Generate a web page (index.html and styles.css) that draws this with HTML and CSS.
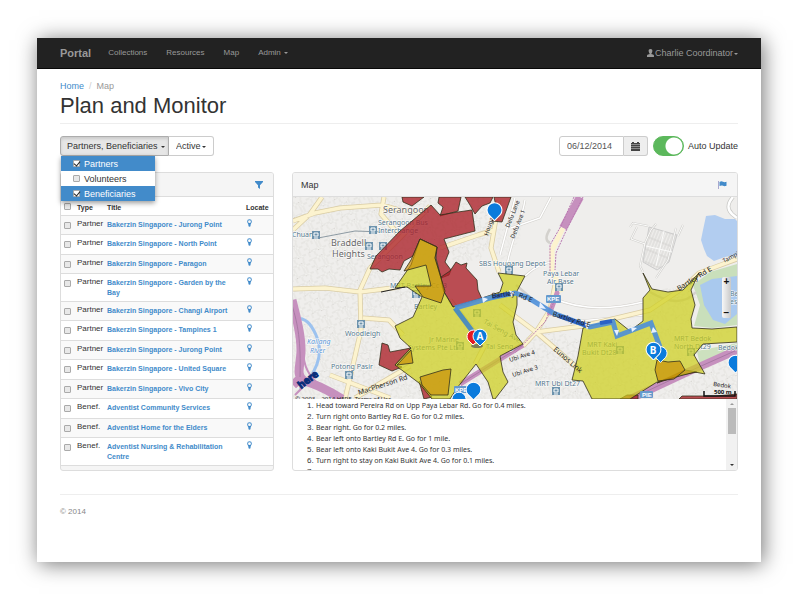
FILE: index.html
```html
<!DOCTYPE html>
<html lang="en">
<head>
<meta charset="utf-8">
<title>Plan and Monitor</title>
<link rel="stylesheet" href="styles.css">
</head>
<body>
<svg class="defs" aria-hidden="true">
  <symbol id="pin" viewBox="0 0 6 9"><path d="M3 0a2.800 2.800 0 0 0-2.800 2.800C.2 4.400 1.700 5 1.800 8.200a1.200 .8 0 0 0 2.400 0C4.300 5 5.800 4.400 5.800 2.800A2.800 2.800 0 0 0 3 0zm0 1.200a1.700 1.700 0 1 1 0 3.400 1.700 1.700 0 0 1 0-3.400z" fill="currentColor" fill-rule="evenodd"/></symbol>
  <symbol id="drop" viewBox="-8 -18 16 18"><path d="M0 0L-5.500-5.500A7 7 0 1 1 5.500-5.500z" fill="#0b7bdc" stroke="#fff" stroke-width="1"/></symbol>
</svg>
<div class="page">
  <nav class="navbar">
    <a class="brand" href="#">Portal</a>
    <a href="#">Collections</a>
    <a href="#">Resources</a>
    <a href="#">Map</a>
    <a href="#">Admin <span class="caret"></span></a>
    <a class="user" href="#"><svg class="user-icon" viewBox="0 0 7 8" aria-hidden="true"><path d="M3.500 0C1.800 0 1.400 1.200 1.700 2.600c.2 1 .5 1.500.9 1.900v.5L.5 5.700C0 6 0 6.600 0 8h7c0-1.400 0-2-.5-2.300L4.400 5v-.5c.4-.4.7-.9.9-1.900C5.600 1.200 5.200 0 3.500 0z" fill="currentColor"/></svg>Charlie Coordinator<span class="caret"></span></a>
  </nav>
  <main class="content">
    <div class="crumbs"><a href="#">Home</a><span class="slash">/</span><span>Map</span></div>
    <h1>Plan and Monitor</h1>
    <div class="toolbar">
      <div class="filters">
        <button class="btn active" type="button" aria-expanded="true">Partners, Beneficiaries <span class="caret"></span></button>
        <span class="select-wrap"><select class="btn" aria-label="Status"><option>Active</option></select><span class="caret"></span></span>
        <div class="menu">
          <label class="on"><input type="checkbox" checked>Partners</label>
          <label><input type="checkbox">Volunteers</label>
          <label class="on"><input type="checkbox" checked>Beneficiaries</label>
        </div>
      </div>
      <div class="date">
        <input type="text" value="06/12/2014" aria-label="Date">
        <button type="button" aria-label="Choose date"><svg width="9" height="9" viewBox="0 0 9 9"><path d="M0 1h1V0h2v1h3V0h2v1h1v8H0z" fill="#444"/><path d="M0 2.500h9M0 4.500h9M0 6.500h9" stroke="#bbb" stroke-width=".6"/></svg></button>
      </div>
      <label class="switch"><input type="checkbox" checked><span>Auto Update</span></label>
    </div>
    <div class="columns">
      <section class="panel list">
        <header><button type="button" aria-label="Filter"><svg width="8" height="8" viewBox="0 0 8 8"><path d="M0 0h8v1L5 4.200V8L3 6.500V4.200L0 1z" fill="#428bca"/></svg></button></header>
        <table>
          <thead><tr><th class="c-check"><input type="checkbox" aria-label="Select all"></th><th class="c-type">Type</th><th>Title</th><th class="c-loc">Locate</th></tr></thead>
          <tbody>
            <tr><td><input type="checkbox" aria-label="Select"></td><td>Partner</td><td><a href="#">Bakerzin Singapore - Jurong Point</a></td><td><a href="#" aria-label="Locate"><svg class="pin"><use href="#pin"/></svg></a></td></tr>
            <tr><td><input type="checkbox" aria-label="Select"></td><td>Partner</td><td><a href="#">Bakerzin Singapore - North Point</a></td><td><a href="#" aria-label="Locate"><svg class="pin"><use href="#pin"/></svg></a></td></tr>
            <tr><td><input type="checkbox" aria-label="Select"></td><td>Partner</td><td><a href="#">Bakerzin Singapore - Paragon</a></td><td><a href="#" aria-label="Locate"><svg class="pin"><use href="#pin"/></svg></a></td></tr>
            <tr><td><input type="checkbox" aria-label="Select"></td><td>Partner</td><td><a href="#">Bakerzin Singapore - Garden by the Bay</a></td><td><a href="#" aria-label="Locate"><svg class="pin"><use href="#pin"/></svg></a></td></tr>
            <tr><td><input type="checkbox" aria-label="Select"></td><td>Partner</td><td><a href="#">Bakerzin Singapore - Changi Airport</a></td><td><a href="#" aria-label="Locate"><svg class="pin"><use href="#pin"/></svg></a></td></tr>
            <tr><td><input type="checkbox" aria-label="Select"></td><td>Partner</td><td><a href="#">Bakerzin Singapore - Tampines 1</a></td><td><a href="#" aria-label="Locate"><svg class="pin"><use href="#pin"/></svg></a></td></tr>
            <tr><td><input type="checkbox" aria-label="Select"></td><td>Partner</td><td><a href="#">Bakerzin Singapore - Jurong Point</a></td><td><a href="#" aria-label="Locate"><svg class="pin"><use href="#pin"/></svg></a></td></tr>
            <tr><td><input type="checkbox" aria-label="Select"></td><td>Partner</td><td><a href="#">Bakerzin Singapore - United Square</a></td><td><a href="#" aria-label="Locate"><svg class="pin"><use href="#pin"/></svg></a></td></tr>
            <tr><td><input type="checkbox" aria-label="Select"></td><td>Partner</td><td><a href="#">Bakerzin Singapore - Vivo City</a></td><td><a href="#" aria-label="Locate"><svg class="pin"><use href="#pin"/></svg></a></td></tr>
            <tr><td><input type="checkbox" aria-label="Select"></td><td>Benef.</td><td><a href="#">Adventist Community Services</a></td><td><a href="#" aria-label="Locate"><svg class="pin"><use href="#pin"/></svg></a></td></tr>
            <tr><td><input type="checkbox" aria-label="Select"></td><td>Benef.</td><td><a href="#">Adventist Home for the Elders</a></td><td><a href="#" aria-label="Locate"><svg class="pin"><use href="#pin"/></svg></a></td></tr>
            <tr><td><input type="checkbox" aria-label="Select"></td><td>Benef.</td><td><a href="#">Adventist Nursing &amp; Rehabilitation Centre</a></td><td><a href="#" aria-label="Locate"><svg class="pin"><use href="#pin"/></svg></a></td></tr>
          </tbody>
        </table>
      </section>
      <section class="panel">
        <header><h2>Map</h2><button type="button" aria-label="Flag"><svg width="9" height="8" viewBox="0 0 9 8"><path d="M.5 0v8" stroke="#a9a9cf"/><path d="M1.500 1c1.500-1 2.500-.8 3.500-.2s2 .6 3.500 0v4c-1.500.7-2.500.6-3.500 0s-2-.6-3.500.3z" fill="#428bca"/></svg></button></header>
        <div class="map">
          <svg class="map-art" viewBox="293 197 444 202" role="img" aria-label="Street map of Serangoon, Paya Lebar and Bedok">
            <defs>
              <pattern id="streets" width="22" height="19" patternUnits="userSpaceOnUse" patternTransform="rotate(-24)">
                <path d="M0 3h14v12h8M5 3v11h9M10 0v8M0 10h5M17 0v15M14 6h8M3 14v5M9 14v5M18 15v4" fill="none" stroke="#d3d1cc" stroke-width="1.800"/>
                <path d="M0 3h14v12h8M5 3v11h9M10 0v8M0 10h5M17 0v15M14 6h8M3 14v5M9 14v5M18 15v4" fill="none" stroke="#fcfcfa" stroke-width="1"/>
              </pattern>
              <pattern id="depot" width="3" height="12" patternUnits="userSpaceOnUse" patternTransform="rotate(22)">
                <path d="M1 0v12M0 1h3" stroke="#cfcecb" stroke-width=".8" fill="none"/>
              </pattern>
              <g id="station"><rect x="-4" y="-4" width="8" height="8" fill="#6d93ad"/><path d="M-2-2h4v3h-4zM-2 3h4" fill="none" stroke="#fff"/></g>
            </defs>
            <rect x="293" y="197" width="444" height="202" fill="#efeeec"/>
            <g fill="url(#streets)">
              <path d="M293 197H500L495 235 480 260 450 262 430 300 380 320 405 350 430 399H293z"/>
              <path d="M500 355L545 325 590 345 575 380 590 399H495z"/>
              <path d="M395 290L455 307 512 295 520 340 490 399 410 399zM585 330L650 323 692 328 735 330 700 350 690 370 640 399 585 399zM690 375L737 355V399H640zM650 290L700 285 692 325 645 322z"/>
              <path d="M497 215L525 200 520 240 495 270z" opacity=".6"/>
            </g>
            <path d="M706 216L715 215 725 219 735 219 737 221V255L725 257 714 261 707 256 704 249 701 240 703 230z" fill="#b2cdf0"/>
            <path d="M693 285L710 272 737 264V325L712 328 694 326 700 305z" fill="#c9dfbb"/>
            <path d="M700 285L712 279 737 276V314L725 324 713 320 704 305z" fill="#a9c9ee"/>
            <path d="M697 351L737 343V350L700 366z" fill="#cde1bf"/>
            <path d="M733 197C727 204 727 209 732 214L737 218" fill="none" stroke="#c9c9c6" stroke-width="4"/>
            <path d="M733 197C727 204 727 209 732 214L737 218" fill="none" stroke="#fff" stroke-width="2.500"/>
            <path d="M649 227L677 235 669 262 657 270 643 262z" fill="url(#depot)" stroke="#ccc"/>
            <path d="M630 227L633 223 648 226M637 227L631 239 645 244M683 225L678 236M676 228L668 260 656 278M643 272L640 266 645 243 651 230 656 224" fill="none" stroke="#d0cfcc" stroke-width="2"/>
            <path d="M630 227L633 223 648 226M637 227L631 239 645 244M683 225L678 236M676 228L668 260 656 278M643 272L640 266 645 243 651 230 656 224M646 246L672 252M664 231L656 266" fill="none" stroke="#fbfbfa" stroke-width="1"/>
            <g fill="none" stroke="#d3d1cd" stroke-width="2.500">
              <path d="M515 198L508 225 500 255M525 200C521 225 512 235 506 270M511 228L540 218 551 197M550 229Q543 240 550 243M525 276Q540 262 555 262M516 285L545 310M527 298L570 322 643 315M650 292Q680 310 696 292M553 298Q590 315 643 302"/>
            </g>
            <g fill="none" stroke="#fff" stroke-width="1.500">
              <path d="M515 198L508 225 500 255M525 200C521 225 512 235 506 270M511 228L540 218 551 197M525 276Q540 262 555 262M527 298L570 322 643 315M553 298Q590 315 643 302"/>
            </g>
            <path d="M293 318C306 317 311 324 316 335C322 348 321 362 309 379L300 389" fill="none" stroke="#9cc2ef" stroke-width="3"/>
            <g fill="none" stroke="#d9cca5" stroke-width="5" stroke-linejoin="round">
              <path d="M293 221L315 213 340 208 382 205 399 210 425 213M322 197L310 214 293 230M384 197L381 214 399 235M370 268L360 290 361 330 353 365 345 399M293 289L325 288 360 292 400 287M370 268L400 238 430 206M363 318L389 320 403 335M499 200L493 236 491 248 499 272M440 248L478 235 494 230M500 305L536 332 580 370M555 285L550 310 536 332 524 345 512 350M737 259L699 273 683 288 650 310 583 326 536 332M355 398L410 366M330 375L390 398M475 364L485 345 473 330 450 300"/>
            </g>
            <g fill="none" stroke="#fcf3cf" stroke-width="3.500" stroke-linejoin="round">
              <path d="M293 221L315 213 340 208 382 205 399 210 425 213M322 197L310 214 293 230M384 197L381 214 399 235M370 268L360 290 361 330 353 365 345 399M293 289L325 288 360 292 400 287M370 268L400 238 430 206M363 318L389 320 403 335M499 200L493 236 491 248 499 272M440 248L478 235 494 230M500 305L536 332 580 370M555 285L550 310 536 332 524 345 512 350M737 259L699 273 683 288 650 310 583 326 536 332M355 398L410 366M330 375L390 398M475 364L485 345 473 330 450 300"/>
            </g>
            <g fill="none" stroke="#c690be">
              <path d="M292 300C297 320 301 335 301 350S295 375 304 381Q320 385 342 399M293 385L303 376" stroke-width="9"/>
              <path d="M580 197L563 228M630 399L690 371 737 350" stroke-width="8"/>
              <path d="M560 285L549 315M523 345L460 384" stroke-width="5"/>
              <path d="M304 343Q300 370 320 385L338 399M295 395L315 375" stroke-width="2"/>
            </g>
            <path d="M292 305C298 325 301 340 300 377M630 399L690 371 737 350M523 345L460 384" fill="none" stroke="#a87aa4" stroke-width="1"/>
            <path d="M563 228L552 250V270L562 292" fill="none" stroke="#fcf3cf" stroke-width="5"/>
            <path d="M574 197L561 226 550 245 550 275M583 197L566 231 556 253 555 270M557 295L545 322 515 353" fill="none" stroke="#b877b0" stroke-width="1" stroke-dasharray="2 1"/>
            <path d="M318 238L355 231 383 232" fill="none" stroke="#8d9aa3" stroke-width="1"/>
            <g class="lbl">
              <text x="292" y="237">Chuan</text>
              <text x="378" y="225">Serangoon Bus</text><text x="378" y="233">Interchange</text>
              <text x="367" y="259">Serangoon</text>
              <text x="390" y="288">MRT Bartley Cc13</text>
              <text x="414" y="309">Bartley</text>
              <text x="345" y="336">Woodleigh</text>
              <text x="331" y="369">Potong Pasir</text>
              <text x="429" y="342">Jr Marine</text><text x="408" y="350">Systems Pte Ltd</text>
              <text x="486" y="349">Tai Seng</text>
              <text x="483" y="323" transform="rotate(29 483 323)">Tai Seng Ave</text>
              <text x="479" y="266">SBS Hougang Depot</text>
              <text x="543" y="276">Paya Lebar</text><text x="547" y="284">Air Base</text>
              <text x="535" y="386">MRT Ubi Dt27</text>
              <text x="587" y="347">MRT Kaki</text><text x="582" y="355">Bukit Dt28</text>
              <text x="674" y="341">MRT Bedok</text><text x="674" y="349">North Dt29</text>
              <text x="718" y="350">Bedok</text>
              <text x="730" y="296">Be</text><text x="730" y="304">es</text>
            </g>
            <g class="lbl big"><text x="383" y="213">Serangoon</text><text x="331" y="246">Braddell</text><text x="332" y="257">Heights</text></g>
            <g class="lbl water"><text x="307" y="344">Kallang</text><text x="310" y="353">River</text></g>
            <use href="#station" x="316" y="235"/><use href="#station" x="373" y="230"/><use href="#station" x="369" y="246"/><use href="#station" x="383" y="246"/><use href="#station" x="361" y="324"/><use href="#station" x="349" y="375"/><use href="#station" x="416" y="294"/><use href="#station" x="477" y="313"/><use href="#station" x="460" y="346"/><use href="#station" x="509" y="270"/><use href="#station" x="559" y="287"/><use href="#station" x="556" y="391"/><use href="#station" x="620" y="350"/><use href="#station" x="691" y="352"/>
            <g stroke="#33301c" stroke-width=".8" stroke-linejoin="round">
              <g fill="#aa2028" fill-opacity=".78">
                <path d="M402 197H424L420 200 412 206 403 202z"/>
                <path d="M439 197H461L458 211 440 216 443 207 438 203z"/>
                <path d="M465 197H493L490 203 482 206 475 214 470 205z"/>
                <path d="M494 197H511L502 222 492 221 497 211z"/>
                <path d="M431 205L440 215 458 212 472 210 475 231 444 239 449 252 445 262 451 270 449 275 441 278 436 258 437 247 420 239 413 256 404 261 400 270 389 269 382 272 378 269 370 269 376 256 400 231z"/>
                <path d="M441 277L450 271 456 262 461 265 467 263 466 268 477 280 478 290 482 299 466 305 453 307 443 290z"/>
                <path d="M382 343L388 345 390 352 411 348 395 365 402 367 392 371 379 365z"/>
                <path d="M685 370L697 372 681 375 657 383z"/>
                <path d="M620 399L627 395H638V399zM679 399L682 396 716 396 737 394V399z"/>
                <path d="M419 381L432 397 424 399z"/>
              </g>
              <g fill="#cdcf18" fill-opacity=".7">
                <path d="M420 239L437 247 435 258 441 278 444 292 453 307 482 298 500 292 503 283 498 273 525 276 517 291 517 305 513 322 516 335 523 344 500 356 503 372 508 382 495 399H493L488 382 476 364 457 388 450 399H432L419 383 395 365 411 348 400 338 395 326 413 317 422 297 407 287 395 288 411 265z"/>
                <path d="M643 273L652 289 668 292 683 290 699 273 691 290 695 305 691 319 692 328 712 329 737 327V342L703 344 694 355 705 374 695 372 657 382 630 399H592L583 381 572 380 578 356 583 328 615 319 630 331 643 321V298L650 290z"/>
              </g>
              <g fill="#c78b00" fill-opacity=".65">
                <path d="M420 239L437 247 435 258 441 278 445 291 441 303 423 297 415 286 431 286 426 265 404 271 411 260z"/>
                <path d="M420 377L443 370 451 369 448 395 431 395 422 385z"/>
                <path d="M411 350L413 363 397 365z"/>
                <path d="M657 360L668 362 680 361 685 370 674 379 658 381 655 370z"/>
              </g>
            </g>
            <path d="M381 292L405 287" fill="none" stroke="#222"/>
            <path d="M455 308L473 332" stroke="#4d8dbb" stroke-width="5" fill="none"/>
            <path d="M455 308L490 298 515 293 527 297 553 313 590 327 613 322 617 336 651 323 660 347" fill="none" stroke="#4d8fd9" stroke-width="5" stroke-opacity=".9"/>
            <path d="M492 297L513 293M559 316L588 326M600 323L612 321" stroke="#2c62c4" stroke-width="4"/>
            <path d="M482 297l6 2-5 4zM509 290l6 3-4 4zM540 302l6 7-7-1zM590 323l-3 7-2-6zM614 330l3 6 2-6zM631 327l6 1-5 4zM653 327l4 5-6 1z" fill="#e8f1ff"/>
            <g class="road-lbl">
              <text x="359" y="395" transform="rotate(-18 359 395)" class="main">MacPherson Rd</text>
              <text x="492" y="298" transform="rotate(-6 492 298)">Bartley</text><text x="518" y="297" transform="rotate(22 518 297)">Rd E</text>
              <text x="552" y="316" transform="rotate(17 552 316)">Bartley Rd E</text>
              <text x="488" y="236" transform="rotate(-72 488 236)" class="small">Hougang</text>
              <text x="509" y="228" transform="rotate(-68 509 228)" class="small">Defu Lane</text>
              <text x="514" y="239" transform="rotate(-68 514 239)" class="small">Defu Ave 1</text>
              <text x="510" y="362" transform="rotate(-18 510 362)" class="small">Ubi Ave 4</text>
              <text x="513" y="377" transform="rotate(-18 513 377)" class="small">Ubi Ave 3</text>
              <text x="553" y="350" transform="rotate(41 553 350)">Eunos Link</text>
              <text x="679" y="291" transform="rotate(-32 679 291)">Bartley Rd E</text>
              <text x="724" y="263" transform="rotate(-28 724 263)" class="small">Tampi</text>
              <text x="713" y="386" transform="rotate(8 713 386)" class="small">Bedok</text>
            </g>
            <g class="shield"><rect x="546" y="295" width="15" height="8" rx="1"/><text x="547" y="301">KPE</text><rect x="454" y="386" width="14" height="7" rx="1"/><text x="455" y="392">KPE</text><rect x="640" y="391" width="13" height="7" rx="1"/><text x="642" y="397">PIE</text></g>
            <text class="here" x="301" y="389" transform="rotate(-37 301 389)">here</text>
            <text class="copy" x="295" y="401">© 2003 – 2014 HERE. Terms of Use</text>
            <ellipse cx="477" cy="346" rx="6" ry="2" fill="#555" opacity=".7"/>
            <use href="#drop" x="486" y="201" width="17" height="20"/>
            <path d="M473 345L468 340A6.500 6.500 0 1 1 479 340z" fill="#e31b23" stroke="#fff"/>
            <g class="mark"><use href="#drop" x="472" y="328" width="16" height="18"/><text x="480" y="340">A</text>
              <use href="#drop" x="465" y="381" width="17" height="19"/><use href="#drop" x="451" y="391" width="16" height="18"/>
              <use href="#drop" x="653" y="345" width="15" height="18"/><use href="#drop" x="645" y="341" width="17" height="19"/><text x="653" y="354">B</text>
              <use href="#drop" x="727" y="354" width="17" height="19"/></g>
            <path d="M704 391V396H735V391" fill="none" stroke="#111" stroke-width="1.500"/>
            <text class="scale" x="714" y="394">500 m</text>
          </svg>
          <div class="zoom"><button type="button">+</button><button type="button">−</button></div>
        </div>
        <div class="route">
          <ol>
            <li><span>Head toward Pereira Rd on Upp Paya Lebar Rd. Go for 0.4 miles.</span></li>
            <li><span>Turn right onto Bartley Rd E. Go for 0.2 miles.</span></li>
            <li><span>Bear right. Go for 0.2 miles.</span></li>
            <li><span>Bear left onto Bartley Rd E. Go for 1 mile.</span></li>
            <li><span>Bear left onto Kaki Bukit Ave 4. Go for 0.3 miles.</span></li>
            <li><span>Turn right to stay on Kaki Bukit Ave 4. Go for 0.1 miles.</span></li>
            <li></li>
          </ol>
          <div class="scroll" aria-hidden="true"><i class="up"></i><i class="thumb"></i><i class="down"></i></div>
        </div>
      </section>
    </div>
    <footer>© 2014</footer>
  </main>
</div>
</body>
</html>
```
FILE: styles.css
```css
* { box-sizing: border-box; }
body {
  margin: 0;
  padding: 38px 39px 38px 37px;
  background: #fff;
  color: #333;
  font: 9px/12px "Liberation Sans", Arial, sans-serif;
}
a { color: #428bca; text-decoration: none; }
button, input, select { font: inherit; color: inherit; margin: 0; }
button { cursor: pointer; }
.defs { position: absolute; width: 0; height: 0; }
.page { background: #fff; box-shadow: 2px 2px 20px rgba(0, 0, 0, .55); }

.navbar {
  display: flex;
  align-items: center;
  gap: 19px;
  height: 31px;
  padding: 0 23px;
  background: #222;
  border-bottom: 1px solid #080808;
}
.navbar a { color: #999; font-size: 8px; }
.navbar .brand { margin-right: -2px; font-size: 11px; font-weight: bold; }
.navbar .user { margin-left: auto; font-size: 9px; }
.user-icon { width: 7px; height: 8px; margin-right: 1px; vertical-align: -1px; }
.caret {
  display: inline-block;
  border: 2px solid transparent;
  border-top-color: currentColor;
  border-bottom: 0;
  margin-left: 1px;
  vertical-align: middle;
}

.content { padding: 11px 23px 44px; }
.crumbs { color: #999; }
.slash { color: #ccc; padding: 0 5px; }
h1 {
  margin: 0 0 12px;
  padding: 1px 0 4px;
  border-bottom: 1px solid #eee;
  font-size: 22px;
  line-height: 26px;
  font-weight: normal;
}
.toolbar { display: flex; align-items: center; height: 20px; margin-bottom: 16px; }
.filters { position: relative; display: flex; margin-right: auto; }
.btn {
  height: 20px;
  padding: 0 7px;
  border: 1px solid #ccc;
  border-radius: 0 3px 3px 0;
  background: #fff;
}
.btn.active {
  padding: 0 3px 0 6px;
  border-color: #adadad;
  border-radius: 3px 0 0 3px;
  background: #e6e6e6;
  box-shadow: inset 0 2px 3px rgba(0, 0, 0, .12);
}
.select-wrap { position: relative; }
.select-wrap .btn { appearance: none; width: 45px; border-left: 0; }
.select-wrap .caret { position: absolute; right: 8px; top: 10px; pointer-events: none; }
.menu {
  position: absolute;
  z-index: 2;
  top: 20px;
  left: 1px;
  width: 94px;
  background: #fff;
  box-shadow: 0 2px 5px rgba(0, 0, 0, .4);
}
.menu label { display: flex; align-items: center; gap: 4px; height: 15px; padding-left: 12px; }
.menu .on { background: #428bca; color: #fff; }
input[type="checkbox"] {
  appearance: none;
  display: block;
  width: 7px;
  height: 7px;
  border: 1px solid #aaa;
  border-radius: 1px;
  background: #e8e8e8;
}
.menu input:checked { position: relative; background: #fff; }
.menu input:checked::after {
  content: "";
  position: absolute;
  left: 1px;
  top: -1px;
  width: 3px;
  height: 5px;
  border: solid #222;
  border-width: 0 1px 1px 0;
  transform: rotate(40deg);
}
.date { display: flex; margin-right: 5px; }
.date input {
  width: 65px;
  height: 20px;
  padding: 0 7px;
  border: 1px solid #ccc;
  border-radius: 3px 0 0 3px;
  color: #555;
}
.date button {
  width: 24px;
  height: 20px;
  padding: 0;
  border: 1px solid #ccc;
  border-left: 0;
  border-radius: 0 3px 3px 0;
  background: #eee;
}
.date svg { display: block; margin: 0 auto; }
.switch { display: flex; align-items: center; gap: 4px; }
.switch input[type="checkbox"] {
  width: 31px;
  height: 20px;
  border: 1px solid #5cb85c;
  border-radius: 10px;
  background: radial-gradient(circle at 20px 9px, #fff 8px, #5cb85c 9px);
}

.columns { display: grid; grid-template-columns: 214fr 446fr; gap: 18px; }
.panel {
  overflow: hidden;
  border: 1px solid #ddd;
  border-radius: 3px;
  background: #fff;
}
.list { background: #f5f5f5; }
.panel header {
  display: flex;
  align-items: center;
  height: 24px;
  padding: 0 10px 0 8px;
  border-bottom: 1px solid #ddd;
  background: #f5f5f5;
}
.panel h2 { margin: 0; font-size: 9px; font-weight: normal; }
.panel header button { margin-left: auto; padding: 0; border: 0; background: none; }
.panel header svg { display: block; }

table { width: 100%; border-collapse: collapse; table-layout: fixed; background: #fff; }
th, td { padding: 3px 2px 3px 0; text-align: left; vertical-align: top; line-height: 10px; }
th { height: 18px; padding: 6px 2px 1px 0; border-bottom: 1px solid #ddd; font-size: 7px; }
td { height: 19px; border-bottom: 1px solid #ddd; font-size: 8px; white-space: nowrap; }
td:nth-child(3) { font-size: 7px; font-weight: bold; white-space: normal; padding-top: 4px; padding-right: 12px; }
tbody tr:nth-child(even) td { height: 20px; }
tbody tr:nth-child(odd) { background: #f9f9f9; }
th input { margin-left: 3px; }
td input[type="checkbox"] { margin: 3px 0 0 3px; }
.c-check { width: 16px; }
.c-type { width: 30px; }
.c-loc { width: 27px; padding-right: 0; }
.pin { display: block; width: 5px; height: 8px; margin-left: 1px; }

.map { position: relative; }
.map-art { display: block; width: 100%; height: auto; }
.lbl { font: 7px "Noto Sans", sans-serif; fill: #517489; stroke: #fff; stroke-width: 1px; paint-order: stroke; }
.big { font-size: 9px; fill: #666; }
.water { font-style: italic; fill: #5b95d4; }
.road-lbl { font: 7px "Noto Sans", sans-serif; fill: #222; }
.small { font-size: 6px; }
.shield { font: bold 6px "Liberation Sans", sans-serif; fill: #fff; }
.shield rect { fill: #6699cc; }
.here { font: bold 10px "Noto Sans", sans-serif; fill: #092d79; stroke: #092d79; stroke-width: 1px; }
.copy { font: 6px "Noto Sans", sans-serif; fill: #222; }
.mark { font: bold 10px "Noto Sans", sans-serif; fill: #fff; text-anchor: middle; }
.scale { font: bold 6px "Noto Sans", sans-serif; fill: #111; }
.zoom {
  position: absolute;
  right: 6px;
  top: 80px;
  display: flex;
  flex-direction: column;
  justify-content: space-between;
  width: 9px;
  height: 41px;
  border-radius: 2px;
  background: linear-gradient(90deg, #f7f7f7, #c9c9c9);
}
.zoom button { height: 10px; padding: 0; border: 0; background: none; font-size: 10px; font-weight: bold; line-height: 10px; color: #111; }

.route { display: flex; height: 71px; overflow: hidden; }
.route ol { flex: 1; margin: 0; padding: 1px 0 0 23px; line-height: 11px; }
.route li { height: 11px; }
.route li::marker { font-size: 8px; }
.route span { font: 7px/11px "Noto Sans", sans-serif; vertical-align: top; }
.scroll {
  display: flex;
  flex-direction: column;
  align-items: center;
  width: 11px;
  padding: 4px 0;
  background: #f1f1f1;
}
.up { border: 2px solid transparent; border-top: 0; border-bottom-color: #999; }
.thumb { width: 8px; height: 26px; margin-top: 3px; background: #bbb; }
.down { margin-top: auto; border: 2px solid transparent; border-bottom: 0; border-top-color: #333; }

footer { margin-top: 23px; padding-top: 11px; border-top: 1px solid #eee; color: #888; font-size: 8px; }
```
